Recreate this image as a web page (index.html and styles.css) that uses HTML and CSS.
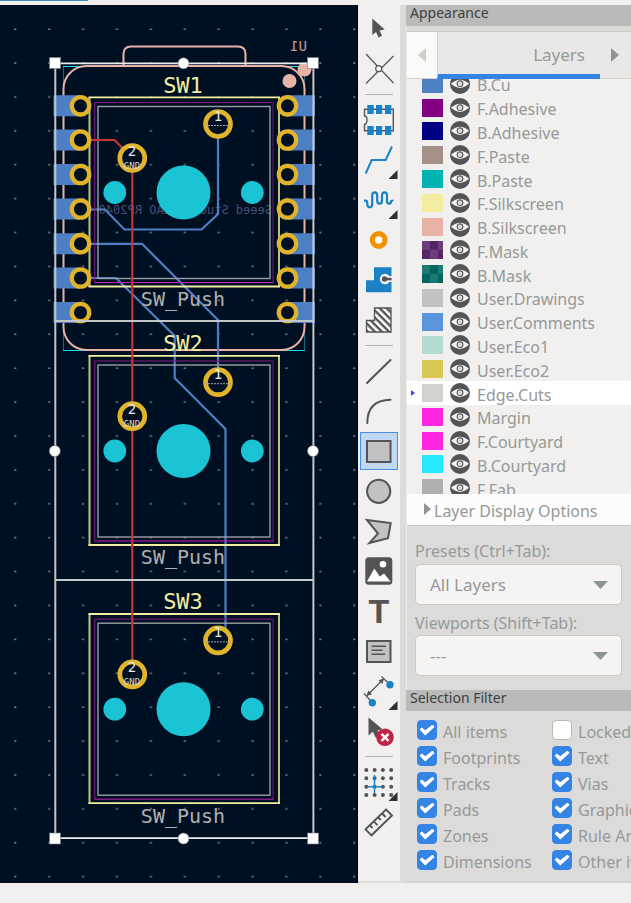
FILE: index.html
```html
<!DOCTYPE html>
<html lang="en">
<head>
<meta charset="utf-8">
<meta name="viewport" content="width=device-width, initial-scale=1">
<title>PCB Editor</title>
<link rel="stylesheet" href="styles.css">
</head>
<body>
<svg class="defs" aria-hidden="true">
  <defs>
    <symbol id="eye" viewBox="0 0 20 20">
      <circle cx="10" cy="10" r="10" fill="#545454"/>
      <path d="M1 9.800Q10 1.500 19 9.800Q10 18 1 9.800Z" fill="#f4f3f2"/>
      <circle cx="10" cy="9.700" r="2.800" fill="#f4f3f2" stroke="#545454" stroke-width="1.200"/>
      <circle cx="10" cy="9.700" r="0.900" fill="#b4b4b4"/>
    </symbol>
    <symbol id="more" viewBox="0 0 40 40"><path d="M38.500 30V39H29.500Z" fill="#2e3234"/></symbol>
    <pattern id="dots" x="14" y="28" width="33.900" height="33.900" patternUnits="userSpaceOnUse">
      <rect x="0.300" y="0.500" width="2" height="1.400" fill="#8b9196"/>
    </pattern>
    <pattern id="hatch" width="5" height="5" patternUnits="userSpaceOnUse" patternTransform="rotate(45)">
      <rect width="5" height="2.400" fill="#545454"/>
    </pattern>
    <g id="hole"><circle r="8.700" fill="#001023" stroke="#e2b42c" stroke-width="4.300"/></g>
    <g id="padrow">
      <path d="M53.500 -10.500H80V10.500H53.500ZM288 -10.500H315V10.500H288Z" fill="#4d7fc4"/>
      <use href="#hole" x="80.500"/><use href="#hole" x="287.500"/>
    </g>
    <g id="switch">
      <g fill="none">
        <path d="M89.500 97V287M279 97V287" stroke="#c2c082" stroke-width="2"/>
        <path d="M88.500 97.300H280M88.500 286.500H280" stroke="#f2eda1" stroke-width="1.800"/>
        <path d="M94.700 102.500V282.500M94.700 102.500H273" stroke="#84198a"/>
        <path d="M273 102.500V282.500" stroke="#4a1755" stroke-width="1.500"/>
        <path d="M94.700 282.500H273.500" stroke="#c221b5"/>
        <rect x="98" y="106.500" width="172" height="172" stroke="#9b9fa4" stroke-width="1.400"/>
      </g>
      <g fill="#1ac4d4"><circle cx="183.500" cy="192.500" r="27"/><circle cx="114.800" cy="192.500" r="11.400"/><circle cx="252.300" cy="192.500" r="11.400"/></g>
    </g>
    <g id="pins">
      <circle cx="218" cy="124" r="12.500" fill="#001023" stroke="#e2b42c" stroke-width="4.700"/>
      <circle cx="132.300" cy="158" r="12.500" fill="#001023" stroke="#e2b42c" stroke-width="4.700"/>
      <path d="M205 125.500H231" stroke="#9da5ad" stroke-width="1" stroke-dasharray="2 1"/>
      <g class="pin-text"><text x="218" y="121">1</text><text x="132" y="156">2</text></g>
      <text class="net-text" x="132" y="169">GND</text>
    </g>
  </defs>
</svg>
<div class="window-edge"></div>
<main class="editor">
  <section class="board" aria-label="Board">
    <svg class="board-view" viewBox="0 5 358 878">
      <rect y="5" width="358" height="878" fill="#001023"/>
      <rect y="5" width="358" height="878" fill="url(#dots)"/>
      <g fill="none">
        <rect x="63.500" y="66.500" width="241" height="284" stroke="#196b7c"/>
        <path d="M63 350.500H305M63 66.500H80M288 66.500H305" stroke="#26d6ea"/>
        <g stroke="#e8b2a7" stroke-width="2">
          <rect x="63.500" y="66" width="241" height="284" rx="23"/>
          <path d="M123.500 65V54Q123.500 46.500 131 46.500H238Q245.500 46.500 245.500 54V65"/>
        </g>
      </g>
      <g fill="#e8b2a7"><circle cx="304.500" cy="69.500" r="7"/><circle cx="289.500" cy="81" r="7"/></g>
      <text class="back-ref" transform="translate(307 51) scale(-1 1)">U1</text>
      <text class="back-value" transform="translate(272 214) scale(-1 1)">Seeed Studio XIAO RP2040</text>
      <g fill="none" stroke="#4d7fc4" stroke-width="2.200">
        <path d="M88 209.500H105L124.500 229.500H201.500L218 214V135"/>
        <path d="M88 243.800H142L218 320V372"/>
        <path d="M88 278H116L174.700 336V378L225.500 429V632"/>
      </g>
      <use href="#switch"/><use href="#switch" y="258.500"/><use href="#switch" y="516.700"/>
      <g class="silk-text"><text x="183" y="93">SW1</text><text x="183" y="351">SW2</text><text x="183" y="609">SW3</text></g>
      <g class="fab-text"><text x="183" y="306">SW_Push</text><text x="183" y="564">SW_Push</text><text x="183" y="823">SW_Push</text></g>
      <path d="M88 140H114.500L124 149.500M132.300 170V662" fill="none" stroke="#c83434" stroke-width="2.200"/>
      <use href="#padrow" y="105.800"/><use href="#padrow" y="140"/><use href="#padrow" y="174.500"/><use href="#padrow" y="209"/><use href="#padrow" y="243.700"/><use href="#padrow" y="278"/><use href="#padrow" y="312.500"/>
      <use href="#pins"/><use href="#pins" y="258.200"/><use href="#pins" y="516.400"/>
      <g fill="none" stroke="#c4c6c8" stroke-width="2">
        <path d="M55.300 63V838M313.400 63V838M55 321H313M55 580H313"/>
        <path d="M55 63.300H313M55 838.200H313" stroke="#eceeed" stroke-width="1.800"/>
      </g>
      <g fill="#fff" stroke="#6f767e" stroke-width=".6">
        <rect x="49.500" y="57.500" width="11" height="11"/><rect x="307.500" y="57.500" width="11" height="11"/>
        <rect x="49.500" y="833" width="11" height="11"/><rect x="307.500" y="833" width="11" height="11"/>
        <circle cx="183.500" cy="63.300" r="5.500"/><circle cx="183.500" cy="838.500" r="5.500"/>
        <circle cx="54.800" cy="451" r="5.500"/><circle cx="313" cy="451" r="5.500"/>
      </g>
      <path d="M357.500 5V883" stroke="#000"/>
    </svg>
  </section>

  <nav class="tools" aria-label="Drawing tools">
    <button class="tool" aria-label="Select"><svg viewBox="0 0 40 40"><path d="M13.300 9.500V26L17 23L19.700 28.500L23 26.800L20.500 21.600L25.700 20.500Z" fill="#545454"/></svg></button>
    <button class="tool" aria-label="Local ratsnest"><svg viewBox="0 0 40 40"><path d="M7 5L34.500 34M34.500 7L7 34.500" stroke="#545454" stroke-width="1.200"/><circle cx="19.700" cy="19.700" r="3" fill="#fff" stroke="#545454" stroke-width="1.200"/></svg></button>
    <hr>
    <button class="tool" aria-label="Add footprint"><svg viewBox="0 0 40 40"><path d="M5.500 9.300H34.300V30.700H5.500V24.500Q8 24 8 20T5.500 16Z" fill="none" stroke="#545454" stroke-width="1.400"/><path d="M8.300 5h6.400v9H8.300zM17 5h6.200v9H17zM26 5h6.300v9H26zM8.300 26h6.400v9H8.300zM17 26h6.200v9H17zM26 26h6.300v9H26z" fill="#1a81c4"/></svg></button>
    <button class="tool" aria-label="Route tracks"><svg viewBox="0 0 40 40"><path d="M6.700 33.500L12.700 20H26.700L33 6.500" fill="none" stroke="#1a81c4" stroke-width="2"/><use href="#more"/></svg></button>
    <button class="tool" aria-label="Tune length"><svg viewBox="0 0 40 40"><path d="M5 20.700H6.500Q8.300 20.700 8.300 24T10.700 27.300T13.200 24V15.500Q13.200 12.300 15.700 12.300T18.200 15.500V20.500Q18.200 23.700 20.600 23.700T23 20.500V15.500Q23 12.300 25.500 12.300T28 15.500V21Q28 23.700 30 23.700T32 21.500Q32 20.500 34.500 20.500" fill="none" stroke="#1a81c4" stroke-width="2.200"/><use href="#more"/></svg></button>
    <button class="tool" aria-label="Add via"><svg viewBox="0 0 40 40"><circle cx="19.700" cy="20" r="6.300" fill="#fff" stroke="#f29100" stroke-width="5.200"/></svg></button>
    <button class="tool" aria-label="Add zone"><svg viewBox="0 0 40 40"><path d="M15 7.300H32.500V32.300H7V20.300H15Z" fill="#1a81c4"/><circle cx="26" cy="19" r="5.200" fill="#f1f0ee"/><path d="M26 16H33V22H26Z" fill="#f1f0ee"/><circle cx="25.500" cy="19" r="2.700" fill="#545454"/><path d="M25 17.800H32.500V20.300H25Z" fill="#545454"/></svg></button>
    <button class="tool" aria-label="Add rule area"><svg viewBox="0 0 40 40"><path d="M15.500 8H32V32H7.500V20.500H15.500Z" fill="#fff"/><path d="M15.500 8H32V32H7.500V20.500H15.500Z" fill="url(#hatch)" stroke="#545454" stroke-width="1.300"/></svg></button>
    <hr>
    <button class="tool" aria-label="Draw line"><svg viewBox="0 0 40 40"><path d="M8 32L31.500 9" stroke="#545454" stroke-width="2" stroke-linecap="round"/></svg></button>
    <button class="tool" aria-label="Draw arc"><svg viewBox="0 0 40 40"><path d="M8.300 32Q8.300 9 31.500 8.700" fill="none" stroke="#545454" stroke-width="2" stroke-linecap="round"/></svg></button>
    <button class="tool tool-active" aria-label="Draw rectangle" aria-pressed="true"><svg viewBox="0 0 40 40"><rect x="8" y="10" width="23.500" height="21" fill="#c2c2c2" stroke="#545454" stroke-width="2"/></svg></button>
    <button class="tool" aria-label="Draw circle"><svg viewBox="0 0 40 40"><circle cx="19.700" cy="20.300" r="11.600" fill="#c2c2c2" stroke="#545454" stroke-width="2"/></svg></button>
    <button class="tool" aria-label="Draw polygon"><svg viewBox="0 0 40 40"><path d="M8 9L31.700 12L29 27.300L10.500 32L19 22.500Z" fill="#c2c2c2" stroke="#545454" stroke-width="2"/></svg></button>
    <button class="tool" aria-label="Add image"><svg viewBox="0 0 40 40"><rect x="6.300" y="6.300" width="27" height="27.500" rx="3.500" fill="#545454"/><circle cx="24" cy="13.300" r="3.300" fill="#fff"/><path d="M8 30.500L15.300 17.500L20.800 25.500L25 22.500L31.500 30.500Z" fill="#fff"/></svg></button>
    <button class="tool" aria-label="Add text"><svg viewBox="0 0 40 40"><text class="tool-letter" x="20" y="32">T</text></svg></button>
    <button class="tool" aria-label="Add text box"><svg viewBox="0 0 40 40"><rect x="8" y="10" width="23.500" height="21" fill="#c2c2c2" stroke="#545454" stroke-width="2"/><path d="M12.500 15.300H27M12.500 19.300H23.500M12.500 23.300H26" stroke="#545454" stroke-width="1.400"/></svg></button>
    <button class="tool" aria-label="Add dimension"><svg viewBox="0 0 40 40"><path d="M8 24.500L24.500 8M5 22.500L13.300 31.500M22.500 5.500L31 13.700" stroke="#545454" stroke-width="1.200"/><path d="M7.500 25L9.300 19.500L13 23.200ZM25 7.500L19.500 9.300L23.200 13Z" fill="#545454"/><circle cx="31" cy="13.700" r="3.700" fill="#1a81c4"/><circle cx="13.300" cy="31.700" r="3.700" fill="#1a81c4"/><use href="#more"/></svg></button>
    <button class="tool" aria-label="Delete"><svg viewBox="0 0 40 40"><path d="M9.500 6.500V24.500L13.700 20.800L17 27L21 25L18.500 19.500L23.500 18.300Z" fill="#545454"/><circle cx="26" cy="26.300" r="8.800" fill="#bf2648"/><path d="M22.500 22.800L29.500 29.800M29.500 22.800L22.500 29.800" stroke="#fff" stroke-width="2.500"/></svg></button>
    <hr>
    <button class="tool" aria-label="Grid origin"><svg viewBox="0 0 40 40"><path d="M7.300 8H33M7.300 16.300H33M7.300 24.700H33M7.300 33H33" stroke="#545454" stroke-width="4" stroke-linecap="round" stroke-dasharray="0 8.300"/><path d="M15.500 13V31M8 24.700H24" stroke="#1a81c4" stroke-width="1.400"/><use href="#more"/></svg></button>
    <button class="tool" aria-label="Measure"><svg viewBox="0 0 40 40"><path d="M27 7.500L33 13.500L12.500 33.300L6.500 27.300ZM11 23.500L13.500 26M15 19.700L18.500 23.200M19.300 15.500L21.800 18M23.200 11.500L26.500 15" fill="none" stroke="#545454" stroke-width="1.900"/></svg></button>
  </nav>
  <div class="splitter"></div>

  <aside class="panels">
    <h2 class="panel-title">Appearance</h2>
    <div class="appearance">
      <div class="tabs">
        <button class="tab-prev" aria-label="Previous tab"><span class="tri tri-left"></span></button>
        <button class="tab">Layers</button>
        <button class="tab-next" aria-label="Next tab"><span class="tri tri-right"></span></button>
      </div>
      <div class="layer-view">
        <ul class="layers">
          <li><i class="swatch b-cu"></i><svg class="eye"><use href="#eye"/></svg><span>B.Cu</span></li>
          <li><i class="swatch f-adhesive"></i><svg class="eye"><use href="#eye"/></svg><span>F.Adhesive</span></li>
          <li><i class="swatch b-adhesive"></i><svg class="eye"><use href="#eye"/></svg><span>B.Adhesive</span></li>
          <li><i class="swatch f-paste"></i><svg class="eye"><use href="#eye"/></svg><span>F.Paste</span></li>
          <li><i class="swatch b-paste"></i><svg class="eye"><use href="#eye"/></svg><span>B.Paste</span></li>
          <li><i class="swatch f-silk"></i><svg class="eye"><use href="#eye"/></svg><span>F.Silkscreen</span></li>
          <li><i class="swatch b-silk"></i><svg class="eye"><use href="#eye"/></svg><span>B.Silkscreen</span></li>
          <li><i class="swatch f-mask"></i><svg class="eye"><use href="#eye"/></svg><span>F.Mask</span></li>
          <li><i class="swatch b-mask"></i><svg class="eye"><use href="#eye"/></svg><span>B.Mask</span></li>
          <li><i class="swatch drawings"></i><svg class="eye"><use href="#eye"/></svg><span>User.Drawings</span></li>
          <li><i class="swatch comments"></i><svg class="eye"><use href="#eye"/></svg><span>User.Comments</span></li>
          <li><i class="swatch eco1"></i><svg class="eye"><use href="#eye"/></svg><span>User.Eco1</span></li>
          <li><i class="swatch eco2"></i><svg class="eye"><use href="#eye"/></svg><span>User.Eco2</span></li>
          <li class="current"><i class="swatch edge"></i><svg class="eye"><use href="#eye"/></svg><span>Edge.Cuts</span></li>
          <li><i class="swatch magenta"></i><svg class="eye"><use href="#eye"/></svg><span>Margin</span></li>
          <li><i class="swatch magenta"></i><svg class="eye"><use href="#eye"/></svg><span>F.Courtyard</span></li>
          <li><i class="swatch cyan"></i><svg class="eye"><use href="#eye"/></svg><span>B.Courtyard</span></li>
          <li><i class="swatch fab"></i><svg class="eye"><use href="#eye"/></svg><span>F.Fab</span></li>
        </ul>
      </div>
      <button class="disclosure"><span class="tri tri-open"></span>Layer Display Options</button>
      <div class="fields">
        <label for="presets">Presets (Ctrl+Tab):</label>
        <div class="select"><select id="presets"><option>All Layers</option></select></div>
        <label for="viewports">Viewports (Shift+Tab):</label>
        <div class="select"><select id="viewports"><option>---</option></select></div>
      </div>
    </div>
    <h2 class="panel-title">Selection Filter</h2>
    <div class="filter">
      <label><input type="checkbox" checked>All items</label>
      <label><input type="checkbox">Locked items</label>
      <label><input type="checkbox" checked>Footprints</label>
      <label><input type="checkbox" checked>Text</label>
      <label><input type="checkbox" checked>Tracks</label>
      <label><input type="checkbox" checked>Vias</label>
      <label><input type="checkbox" checked>Pads</label>
      <label><input type="checkbox" checked>Graphics</label>
      <label><input type="checkbox" checked>Zones</label>
      <label><input type="checkbox" checked>Rule Areas</label>
      <label><input type="checkbox" checked>Dimensions</label>
      <label><input type="checkbox" checked>Other items</label>
    </div>
  </aside>
</main>
<footer class="status"></footer>
</body>
</html>
```
FILE: styles.css
```css
* { box-sizing: border-box; }

body {
  margin: 0;
  min-height: 100vh;
  display: flex;
  flex-direction: column;
  background: #f1f0ee;
  color: #969999;
  font-family: "Noto Sans", "Open Sans", sans-serif;
  font-size: 16px;
  line-height: 24px;
}

button, select, input { font: inherit; color: inherit; margin: 0; }
button { border: 0; padding: 0; background: none; }

.defs { position: absolute; width: 0; height: 0; }

.window-edge {
  height: 5px;
  background: linear-gradient(#3d8fb5, #3d8fb5) 0 0 / 88px 1px no-repeat;
}

.editor {
  display: grid;
  grid-template-columns: minmax(0, 1fr) 42px 6px 225px;
}

/* Board canvas */
.board { background: #001023; }
.board-view { display: block; width: 100%; height: auto; }
.board-view text, .defs text { font-family: "DejaVu Sans Mono", monospace; }
.silk-text { fill: #f2eda1; font-size: 22px; text-anchor: middle; }
.fab-text { fill: #afafaf; font-size: 20px; text-anchor: middle; }
.pin-text { fill: #e6e9ec; font-size: 14px; text-anchor: middle; }
.net-text { fill: #d5d9dd; font-size: 9px; text-anchor: middle; }
.back-ref { fill: #c79a94; font-size: 14px; }
.back-value { fill: #4b4d72; font-size: 12px; }

/* Tool strip */
.tools {
  display: flex;
  flex-direction: column;
  align-items: center;
  padding-top: 4px;
  border-bottom: 2px solid #dcdbda;
}
.tool { display: grid; place-items: center; width: 40px; height: 40px; }
.tool svg { display: block; width: 40px; height: 40px; }
.tool-active {
  width: 38px;
  height: 38px;
  margin: 1px 0;
  background: #c1d8f4;
  box-shadow: inset 0 0 0 1px #4a8fe4;
}
.tool-active svg { margin: -1px; }
.tool-letter {
  fill: #545454;
  font-family: "Liberation Sans", sans-serif;
  font-size: 34px;
  font-weight: 700;
  text-anchor: middle;
}
.tools hr { width: 28px; height: 1px; margin: 5px 0; border: 0; background: #b5b4b2; }

.splitter { background: #dcdbda; }

/* Side panels */
.panels {
  display: flex;
  flex-direction: column;
  overflow: hidden;
  background: #dcdbda;
  border-bottom: 2px solid #d3d2d0;
}
.panel-title {
  margin: 0;
  padding: 0 4px;
  height: 21px;
  background: #babab8;
  color: #3c4144;
  font-size: 14px;
  font-weight: 400;
  line-height: 16px;
}
.appearance { padding: 5px 0 14px; border-left: 1px solid #ebeae8; }

.tabs {
  display: flex;
  height: 48px;
  border-top: 1px solid #cdc9c4;
  background: #e9e8e7;
}
.tab-prev { display: grid; place-items: center; width: 30px; background: #fafaf9; border-bottom: 1px solid #d5d2ce; }
.tab {
  flex: 1;
  padding: 4px 15px 0 0;
  border-bottom: 5px solid #3584e4;
  border-left: 1px solid #d5d2ce;
  font-size: 17px;
  text-align: right;
}
.tab-next { width: 31px; padding-left: 11px; border-bottom: 1px solid #d5d2ce; }

.tri { display: block; width: 8px; height: 14px; background: #8f9494; }
.tri-left { clip-path: polygon(0 50%, 100% 0, 100% 100%); background: #d0ceca; }
.tri-right { clip-path: polygon(0 0, 100% 50%, 0 100%); }
.tri-open { width: 7px; height: 12px; clip-path: polygon(0 0, 100% 50%, 0 100%); }

.layer-view { height: 415px; overflow: hidden; background: #f1f0ee; }
.layers {
  display: grid;
  grid-auto-rows: 1fr;
  height: 428px;
  margin: -7px 0 0;
  padding: 0;
  list-style: none;
}
.layers li { display: flex; align-items: center; padding-left: 15px; min-height: 0; }
.layers li span { padding-top: 3px; }
.layers .current {
  padding-left: 4px;
  background: #fff;
}
.current::before {
  content: "";
  width: 4px;
  height: 6px;
  margin-right: 7px;
  background: #4343ff;
  clip-path: polygon(0 0, 100% 50%, 0 100%);
}
.swatch { width: 21px; height: 18px; margin-right: 7px; }
.eye { width: 20px; height: 20px; margin-right: 7px; }

.b-cu { background: #4d7fc4; }
.f-adhesive { background: #840084; }
.b-adhesive { background: #000084; }
.f-paste { background: #a39189; }
.b-paste { background: #00b3b3; }
.f-silk { background: #f2eda1; }
.b-silk { background: #e8b2a7; }
.f-mask { background: repeating-conic-gradient(#562566 0 25%, #6d3c7d 0 50%) 0 0 / 16px 18px; }
.b-mask { background: repeating-conic-gradient(#02655d 0 25%, #197c74 0 50%) 0 0 / 16px 18px; }
.drawings { background: #c2c2c2; }
.comments { background: #5994dc; }
.eco1 { background: #b4dbd2; }
.eco2 { background: #d8c852; }
.edge { background: #d0d2cd; }
.magenta { background: #ff26e2; }
.cyan { background: #26e9ff; }
.fab { background: #afafaf; }

.disclosure {
  display: flex;
  align-items: center;
  gap: 3px;
  width: 100%;
  height: 32px;
  padding: 3px 0 0 17px;
  background: #fcfcfc;
  border-bottom: 1px solid #cdc9c4;
  white-space: nowrap;
}
.disclosure .tri { margin-bottom: 4px; }

.fields { padding: 13px 9px 0 8px; }
.fields label { display: block; height: 24px; }
.select { position: relative; height: 41px; margin: 1px 0 6px; }
.select + label + .select { margin: 0; }
.select select {
  width: 100%;
  height: 100%;
  padding: 0 40px 0 14px;
  appearance: none;
  border: 1px solid #cdc9c4;
  border-radius: 5px;
  background: #f5f4f2;
  font-size: 17px;
}
.select::after {
  content: "";
  position: absolute;
  top: 17px;
  right: 14px;
  width: 15px;
  height: 8px;
  background: #8f9494;
  clip-path: polygon(0 0, 100% 0, 50% 100%);
  pointer-events: none;
}

.filter {
  display: grid;
  grid-template-columns: 135px 135px;
  grid-auto-rows: 26px;
  padding: 7px 0 0 11px;
}
.filter label { display: flex; align-items: center; gap: 6px; padding-top: 2px; white-space: nowrap; }
.filter input {
  flex: none;
  display: grid;
  place-items: center;
  width: 20px;
  height: 20px;
  margin-bottom: 4px;
  appearance: none;
  border: 1px solid #bdb7b0;
  border-radius: 4px;
  background: #fff;
}
.filter input:checked { background: #3584e4; border-color: #3584e4; }
.filter input:checked::before {
  content: "";
  width: 15px;
  height: 11px;
  background: #fff;
  clip-path: polygon(0 45%, 16% 28%, 38% 52%, 88% 0, 100% 22%, 38% 100%);
}

.status { flex: 1; min-height: 20px; }
```
